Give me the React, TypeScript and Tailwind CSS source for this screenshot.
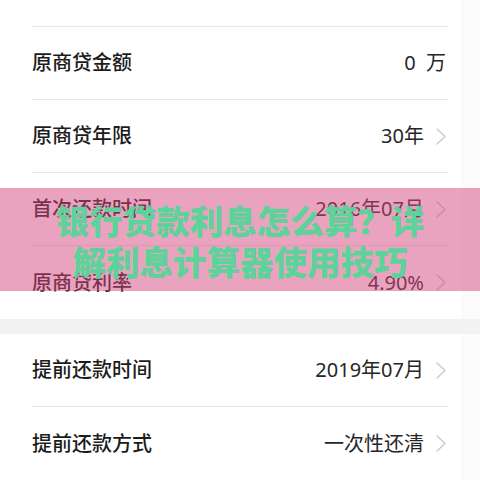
import React from "react";

type Row = { label: string; value: string; arrow: boolean };

const topGroup: Row[] = [
  { label: "贷款类型", value: "商业贷款", arrow: true },
  { label: "原商贷金额", value: "0  万", arrow: false },
  { label: "原商贷年限", value: "30年", arrow: true },
  { label: "首次还款时间", value: "2016年07月", arrow: true },
  { label: "原商贷利率", value: "4.90%", arrow: true },
];

const bottomGroup: Row[] = [
  { label: "提前还款时间", value: "2019年07月", arrow: true },
  { label: "提前还款方式", value: "一次性还清", arrow: true },
];

function Chevron() {
  return (
    <svg width="10" height="17" viewBox="0 0 10 17" className="ml-[12px] shrink-0">
      <polyline
        points="1,1 9,8.5 1,16"
        fill="none"
        stroke="#c9c9c9"
        strokeWidth="1.3"
        strokeLinecap="round"
        strokeLinejoin="round"
      />
    </svg>
  );
}

function ListRow({ row, last }: { row: Row; last: boolean }) {
  return (
    <div className="pl-[32px] pr-[12px]">
      <div
        className={
          "flex h-[73px] items-center justify-between pr-[3px] " +
          (last ? "" : "border-b border-[#e8e8e8]")
        }
      >
        <span className="text-[20px] font-medium text-[#1c1c1c]">{row.label}</span>
        <div className="flex items-center">
          <span className="whitespace-pre text-[20px] text-[#262626]">{row.value}</span>
          {row.arrow && <Chevron />}
        </div>
      </div>
    </div>
  );
}

function Group({ rows }: { rows: Row[] }) {
  return (
    <div className="flex">
      <div className="w-[461px] shrink-0 bg-white">
        {rows.map((r, i) => (
          <ListRow key={r.label} row={r} last={i === rows.length - 1} />
        ))}
      </div>
      <div className="flex-1 bg-[#fbfbfb]" />
    </div>
  );
}

export default function App() {
  return (
    <div
      className="relative h-[480px] w-[480px] overflow-hidden bg-white"
      style={{ fontFamily: '"Noto Sans", "Noto Sans CJK SC", sans-serif' }}
    >
      <div className="-mt-[46px]">
        <Group rows={topGroup} />
        <div className="h-[15px] bg-[#f2f2f2]" />
        <Group rows={bottomGroup} />
        <div className="h-[20px] bg-[#f4f4f4]" />
      </div>

      {/* title banner laid over the list */}
      <div className="absolute left-0 right-0 top-[188px] flex h-[103px] flex-col items-center justify-center bg-[#d6487f]/50">
        <div
          className="text-center text-[33.5px] font-black leading-[41px] text-[#5dd29a]"
          style={{ fontFamily: '"Noto Sans CJK SC", sans-serif' }}
        >
          <div>银行贷款利息怎么算？详</div>
          <div>解利息计算器使用技巧</div>
        </div>
      </div>
    </div>
  );
}
